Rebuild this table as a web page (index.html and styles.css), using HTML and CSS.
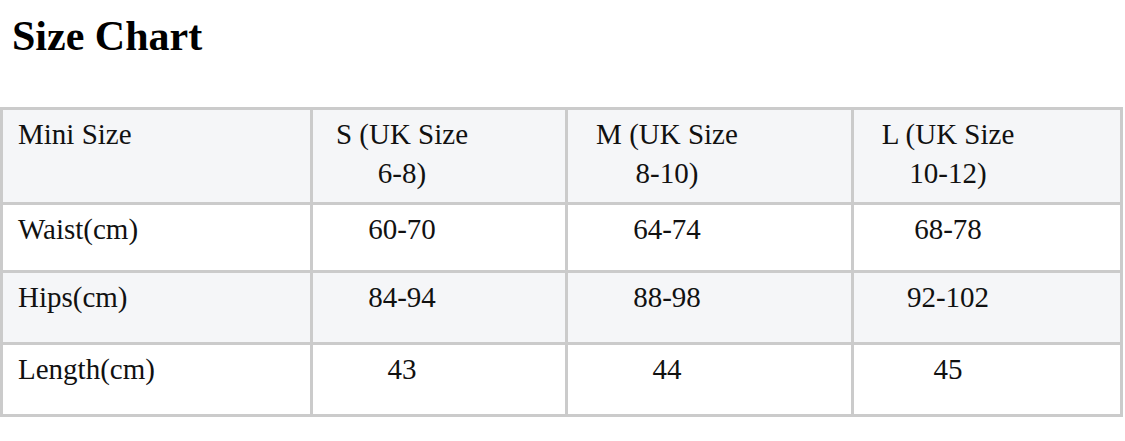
FILE: index.html
```html
<!DOCTYPE html>
<html lang="en">
<head>
    <meta charset="UTF-8">
    <meta name="viewport" content="width=device-width, initial-scale=1.0">
    <title>Size Chart</title>
    <link rel="stylesheet" href="styles.css">
</head>
<body>
    <h2 class="chart-title">Size Chart</h2>

    <!-- Tabela de medidas -->
    <table class="size-table">
        <colgroup>
            <col class="col-label">
            <col class="col-s">
            <col class="col-m">
            <col class="col-l">
        </colgroup>
        <tr class="row-head">
            <td class="label">Mini Size</td>
            <td class="size-s">S (UK Size <span class="nowrap">6-8)</span></td>
            <td class="size-m">M (UK Size <span class="nowrap">8-10)</span></td>
            <td class="size-l">L (UK Size <span class="nowrap">10-12)</span></td>
        </tr>
        <tr class="row-plain row-short">
            <td class="label">Waist(cm)</td>
            <td class="size-s">60-70</td>
            <td class="size-m">64-74</td>
            <td class="size-l">68-78</td>
        </tr>
        <tr class="row-shade">
            <td class="label">Hips(cm)</td>
            <td class="size-s">84-94</td>
            <td class="size-m">88-98</td>
            <td class="size-l">92-102</td>
        </tr>
        <tr class="row-plain">
            <td class="label">Length(cm)</td>
            <td class="size-s">43</td>
            <td class="size-m">44</td>
            <td class="size-l">45</td>
        </tr>
    </table>
</body>
</html>
```

FILE: styles.css
```css
body {
    margin: 0;
    font-family: "Liberation Serif", "Times New Roman", serif;
    color: #111;
    background-color: #fff;
}

.chart-title {
    margin: 0;
    padding: 12px 0 0 12px;
    height: 107px;
    box-sizing: border-box;
    font-size: 42px;
    line-height: 48px;
    font-weight: bold;
    color: #000;
}

.size-table {
    border-collapse: collapse;
    table-layout: fixed;
    width: 1123px;
    font-size: 29px;
    line-height: 39px;
}

.col-label { width: 310px; }
.col-s { width: 255px; }
.col-m { width: 286px; }
.col-l { width: 269px; }

.size-table td {
    border: 3px solid #cbcbcb;
    vertical-align: top;
    text-align: center;
    padding: 5px 15px 0 15px;
}

.size-table td.label {
    text-align: left;
}

/* Cada coluna tem o texto centrado um pouco à esquerda */
.size-table td.size-s {
    padding-left: 16px;
    padding-right: 90px;
}

.size-table td.size-m {
    padding-left: 24px;
    padding-right: 109px;
}

.size-table td.size-l {
    padding-left: 19px;
    padding-right: 97px;
}

.nowrap {
    white-space: nowrap;
}

.row-head td {
    height: 87px;
    background-color: #f5f6f8;
}

.row-shade td {
    height: 64px;
    background-color: #f5f6f8;
}

.row-plain td {
    height: 64px;
    background-color: #fff;
}

.row-short td {
    height: 60px;
}
```
